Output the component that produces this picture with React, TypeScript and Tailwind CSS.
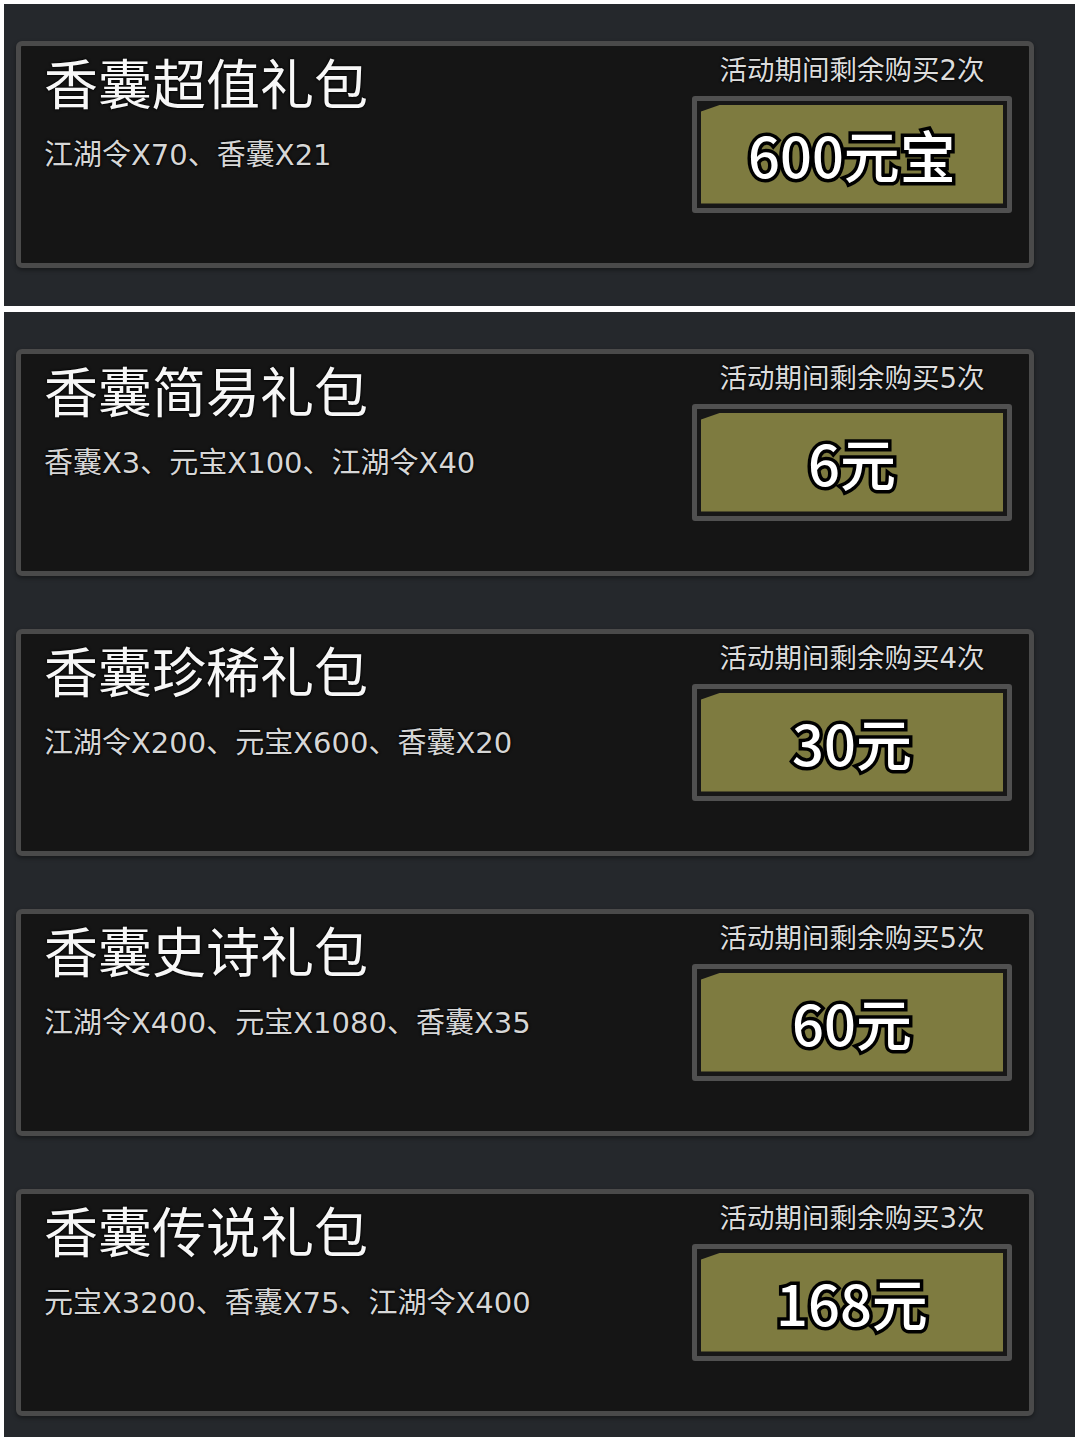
const cjk = { fontFamily: '"Noto Sans CJK SC", "Noto Sans", sans-serif' };
const mixed = { fontFamily: '"DejaVu Sans", "Noto Sans CJK SC", sans-serif' };

type Pack = {
  title: string;
  items: string;
  left: number;
  price: string;
};

const firstPack: Pack = { title: "香囊超值礼包", items: "江湖令X70、香囊X21", left: 2, price: "600元宝" };

const packs: Pack[] = [
  { title: "香囊简易礼包", items: "香囊X3、元宝X100、江湖令X40", left: 5, price: "6元" },
  { title: "香囊珍稀礼包", items: "江湖令X200、元宝X600、香囊X20", left: 4, price: "30元" },
  { title: "香囊史诗礼包", items: "江湖令X400、元宝X1080、香囊X35", left: 5, price: "60元" },
  { title: "香囊传说礼包", items: "元宝X3200、香囊X75、江湖令X400", left: 3, price: "168元" },
];

const PackCard = ({ pack }: { pack: Pack }) => {
  return (
    <div className="w-[1018px] h-[227px] rounded-[6px] border-[5px] border-[#4a4a4a] bg-[#151515] flex justify-between pl-[23px] pr-[17px] shadow-[0_2px_4px_rgba(0,0,0,0.4)]">
      <div className="pt-[9px]">
        <h2 className="text-[54px] leading-none text-[#f7f7f7] [text-shadow:0_0_3px_#000,0_0_2px_#000]">{pack.title}</h2>
        <p className="mt-[32px] text-[29px] leading-none text-[#d6d6d6] [text-shadow:0_0_3px_#000,0_0_2px_#000]" style={mixed}>
          {pack.items}
        </p>
      </div>
      <div className="w-[320px] flex flex-col items-center pt-[11px]">
        <span className="text-[27.5px] leading-none text-[#dcdcdc] [text-shadow:0_0_3px_#000,0_0_2px_#000]" style={mixed}>
          活动期间剩余购买{pack.left}次
        </span>
        <div className="mt-[11px] w-[320px] h-[117px] rounded-[3px] border-[5px] border-[#505050] bg-[#171717] p-[4px]">
          <div className="w-full h-full bg-[#7e7b40] flex items-center justify-center [clip-path:polygon(20px_0,100%_0,100%_100%,0_100%,0_7px)]">
            <span className="text-[56px] leading-none text-white font-medium [-webkit-text-stroke:7px_#000] [paint-order:stroke_fill] [text-shadow:0_0_2px_#000]">
              {pack.price}
            </span>
          </div>
        </div>
      </div>
    </div>
  );
};

const App = () => {
  return (
    <div className="w-[1080px] h-[1442px] bg-white pt-[4px] pl-[4px]" style={cjk}>
      <div className="w-[1071px] h-[302px] bg-[#25282c] pt-[37px] pl-[12px]">
        <PackCard pack={firstPack} />
      </div>
      <div className="mt-[6px] w-[1071px] h-[1125px] bg-[#25282c] pt-[37px] pl-[12px] flex flex-col gap-[53px]">
        {packs.map((p) => (
          <PackCard key={p.title} pack={p} />
        ))}
      </div>
    </div>
  );
};

export default App;
